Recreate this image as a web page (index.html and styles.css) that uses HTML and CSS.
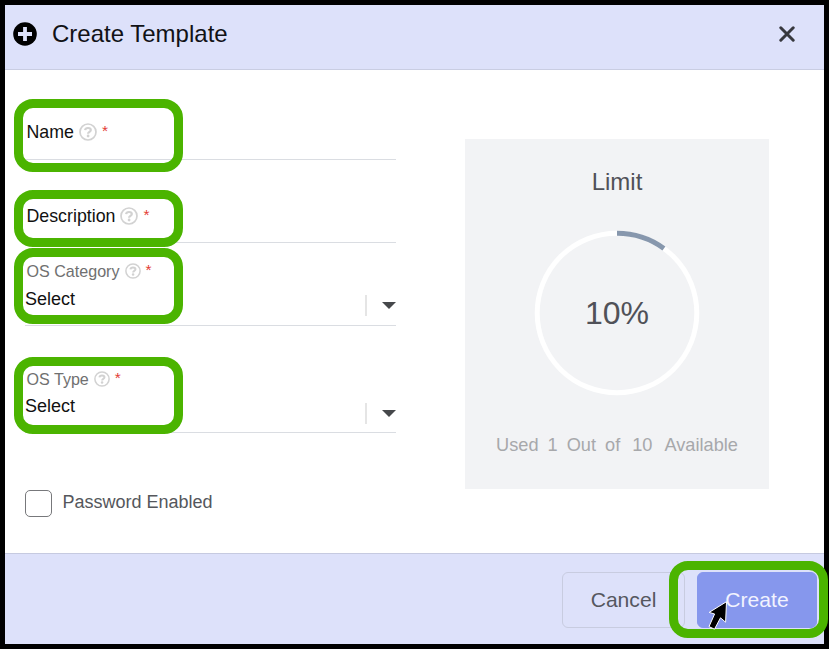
FILE: index.html
```html
<!DOCTYPE html>
<html lang="en">
<head>
<meta charset="utf-8">
<title>Create Template</title>
<link rel="stylesheet" href="styles.css">
</head>
<body>
<svg class="defs" width="0" height="0" aria-hidden="true">
  <symbol id="help" viewBox="0 0 18 18">
    <circle cx="9" cy="9" r="8" fill="none" stroke="currentColor" stroke-width="1.7"/>
    <path d="M6.1 7.2C6.3 5.6 7.5 5 9 5c1.6 0 2.8.8 2.8 2.1 0 1.8-2.7 1.8-2.7 3.6" fill="none" stroke="currentColor" stroke-width="2.2"/>
    <circle cx="9.1" cy="13" r="1.4" fill="currentColor"/>
  </symbol>
</svg>
<div class="dialog">
  <header class="header">
    <svg class="plus" viewBox="0 0 24 24"><circle cx="12" cy="12" r="11.8"/><path d="M12 5v14M5 12h14" stroke="#dde1fa" stroke-width="3.8" stroke-linejoin="round"/></svg>
    <h1 class="title">Create Template</h1>
    <svg class="close" viewBox="0 0 16 16"><path d="M1.8 1.8l12.4 12.4M14.2 1.8L1.8 14.2" stroke="#37383e" stroke-width="3" stroke-linecap="round"/></svg>
  </header>
  <main class="body">
    <form class="form">
      <div class="field name">
        <div class="label">Name<svg class="help"><use href="#help"/></svg><span class="req">*</span></div>
      </div>
      <div class="field description">
        <div class="label">Description<svg class="help"><use href="#help"/></svg><span class="req">*</span></div>
      </div>
      <div class="field category">
        <div class="label small">OS Category<svg class="help"><use href="#help"/></svg><span class="req">*</span></div>
        <div class="select"><span class="value">Select</span><span class="bar"></span><svg class="caret" viewBox="0 0 14 7"><path d="M0 0h14L7 7z"/></svg></div>
      </div>
      <div class="field type">
        <div class="label small">OS Type<svg class="help"><use href="#help"/></svg><span class="req">*</span></div>
        <div class="select"><span class="value">Select</span><span class="bar"></span><svg class="caret" viewBox="0 0 14 7"><path d="M0 0h14L7 7z"/></svg></div>
      </div>
      <div class="check"><span class="box"></span><span class="check-label">Password Enabled</span></div>
    </form>
    <section class="limit">
      <h2 class="limit-title">Limit</h2>
      <div class="gauge">
        <svg class="ring" viewBox="0 0 166 166"><circle cx="83" cy="83" r="79.8" fill="none" stroke="#fff" stroke-width="5"/><path d="M83 3.2A79.8 79.8 0 0 1 129.9 18.4" fill="none" stroke="#8797ad" stroke-width="5"/></svg>
        <span class="percent">10%</span>
      </div>
      <p class="usage"><span class="used">Used</span><span class="count">1</span><span class="out">Out</span><span class="of">of</span><span class="total">10</span><span>Available</span></p>
    </section>
  </main>
  <footer class="footer">
    <button class="btn cancel">Cancel</button>
    <button class="btn create">Create</button>
  </footer>
</div>
<div class="mark mark-name"></div>
<div class="mark mark-description"></div>
<div class="mark mark-category"></div>
<div class="mark mark-type"></div>
<div class="mark mark-create"></div>
<svg class="pointer" viewBox="0 0 20 30"><path d="M18.5 1.7L1.2 12.4 6.6 14 1 26.6 6.5 29.2 12.5 17.8 17.6 22.2z" fill="#000" stroke="#fff" stroke-width="1"/></svg>
</body>
</html>
```
FILE: styles.css
```css
* { box-sizing: border-box; }
html, body { height: 100%; }
body {
  margin: 0;
  padding: 5px;
  background: #000;
  font-family: "Liberation Sans", Arial, sans-serif;
  overflow: hidden;
}
.defs { position: absolute; }
.dialog {
  width: 819px;
  height: 639px;
  display: flex;
  flex-direction: column;
  background: #fff;
}
.header {
  height: 65px;
  flex: none;
  display: flex;
  align-items: center;
  padding: 0 29px 6px 8px;
  background: #dde1fa;
  border-bottom: 1px solid #c9cde2;
}
.plus { width: 24px; height: 24px; }
.title {
  margin: 0 auto 0 15px;
  font-size: 24px;
  line-height: 28px;
  font-weight: 400;
  color: #111216;
}
.close { width: 16px; height: 16px; }
.body {
  flex: 1;
  display: flex;
  justify-content: space-between;
  padding: 0 55px 0 20px;
}
.form { width: 371px; display: flex; flex-direction: column; }
.field { border-bottom: 1px solid #dadde2; }
.name { height: 90px; padding-top: 52px; }
.description { height: 83px; padding-top: 46px; }
.category { height: 83px; padding-top: 18px; }
.type { height: 107px; padding-top: 43px; }
.label {
  display: flex;
  align-items: center;
  height: 20px;
  padding-left: 1.5px;
  font-size: 17.8px;
  line-height: 20px;
  color: #111;
}
.help { width: 18px; height: 18px; margin: -1px 0 0 5px; color: #d2d2d2; }
.req { margin: -2px 0 0 5px; font-size: 15.5px; color: #e33d35; }
.small { font-size: 16.1px; color: #707070; }
.small .help { width: 16px; height: 16px; margin-top: 0; }
.small .req { font-size: 15.5px; }
.select {
  height: 34px;
  display: flex;
  align-items: flex-start;
  font-size: 18px;
  color: #111;
}
.value { margin: 8px auto 0 0; line-height: 20px; }
.type .value { margin-top: 7px; }
.bar { width: 2px; height: 21px; margin-top: 14px; background: #e5e5e5; }
.caret { width: 14px; height: 7px; margin: 21px 0 0 15px; fill: #46484b; }
.check { display: flex; align-items: center; margin-top: 57px; }
.box {
  width: 27px;
  height: 27px;
  border: 1px solid #77787b;
  border-radius: 5px;
}
.check-label { margin: -4px 0 0 10.5px; font-size: 18px; line-height: 20px; color: #55575c; }
.limit {
  width: 304px;
  height: 350px;
  margin-top: 69px;
  padding-top: 29px;
  background: #f2f3f5;
  color: #505158;
  text-align: center;
}
.limit-title { margin: 0; font-size: 24px; line-height: 28px; font-weight: 400; }
.gauge { display: grid; place-items: center; height: 166px; margin-top: 34px; }
.ring { grid-area: 1 / 1; width: 166px; height: 166px; }
.percent { grid-area: 1 / 1; font-size: 32px; line-height: 36px; }
.usage {
  display: flex;
  justify-content: center;
  margin: 39px 0 0;
  font-size: 18.2px;
  line-height: 20px;
  color: #a7a8ab;
}
.used, .count, .of, .out { margin-right: 9px; }
.of { margin-right: 12px; }
.total { margin-right: 12px; }
.footer {
  height: 91px;
  flex: none;
  display: flex;
  justify-content: flex-end;
  gap: 12px;
  padding: 18px 7px 0 0;
  background: #dde1fa;
  border-top: 1px solid #c6cae0;
}
.btn {
  height: 56px;
  padding: 0;
  border: 1px solid #c8cce0;
  border-radius: 6px;
  background: transparent;
  font: 21.1px/24px "Liberation Sans", Arial, sans-serif;
  color: #55575f;
}
.cancel { width: 123px; }
.create { width: 120px; border-color: #8697ed; background: #8697ed; color: #f2f3fe; }
.mark {
  position: absolute;
  left: 14px;
  width: 169px;
  border: 9px solid #4bb400;
  border-radius: 19px;
}
.mark-name { top: 99px; height: 73px; }
.mark-description { top: 190px; height: 57px; }
.mark-category { top: 248px; height: 76px; }
.mark-type { top: 357px; height: 77px; }
.mark-create { left: 669px; top: 561px; width: 159px; height: 77px; }
.pointer { position: absolute; left: 708px; top: 600px; width: 20px; height: 30px; }
```
